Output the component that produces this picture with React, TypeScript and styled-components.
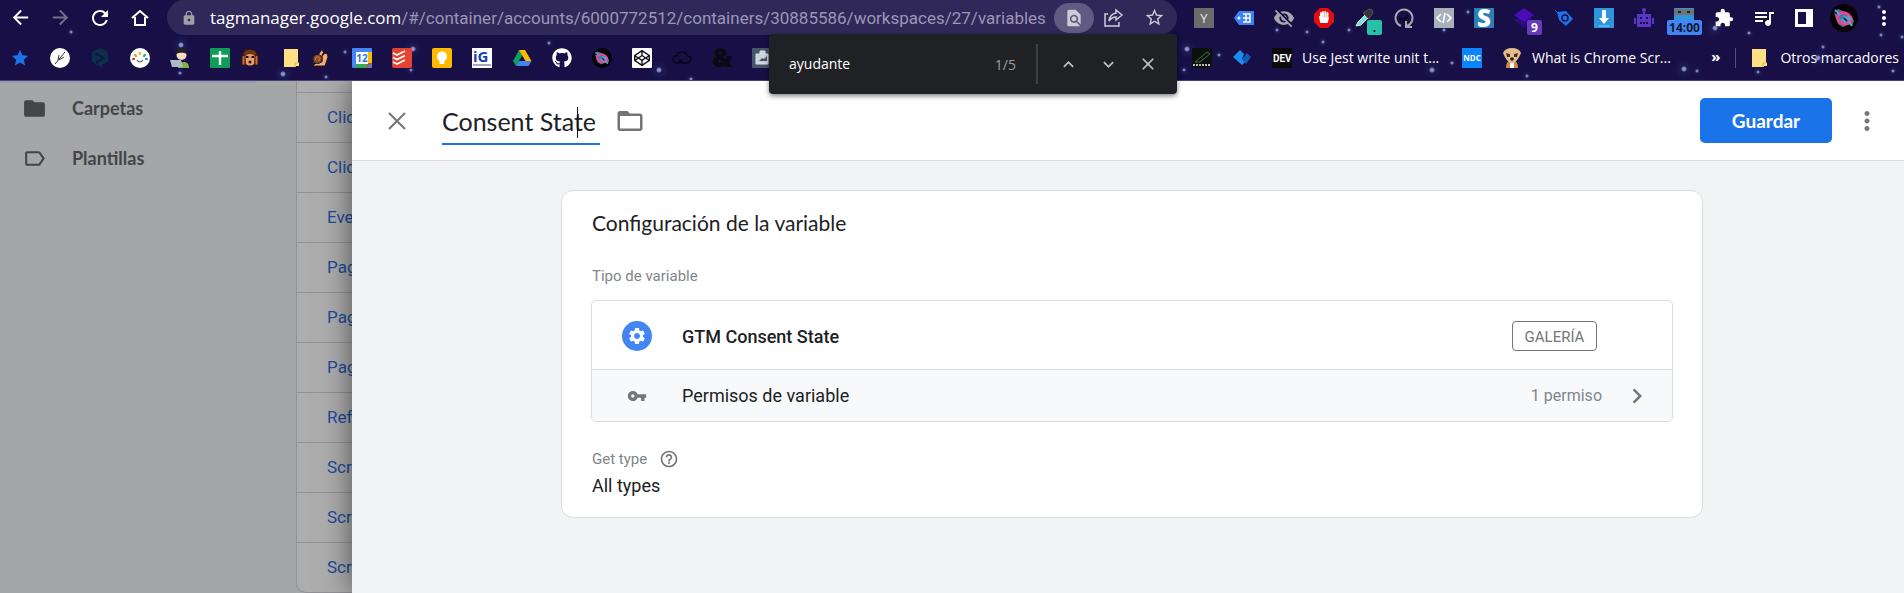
import React from "react";
import styled, { createGlobalStyle, css } from "styled-components";
import {
  MdArrowBack, MdArrowForward, MdRefresh, MdLock, MdFindInPage, MdStarBorder, MdExtension,
  MdQueueMusic, MdMoreVert, MdFolder, MdLabelOutline, MdClose, MdFolderOpen, MdSettings,
  MdVpnKey, MdHelpOutline, MdChevronRight, MdKeyboardArrowUp, MdKeyboardArrowDown,
  MdVisibilityOff, MdStar,
} from "react-icons/md";
import { FaGithub, FaCodepen } from "react-icons/fa";

const UI = `"Open Sans", "Noto Sans", sans-serif`;
const BRAND = `Lato, Roboto, sans-serif`;
const BODY = `Roboto, "Liberation Sans", sans-serif`;

const STARS: [number, number, number][] = [
  [71, 32, 1], [181, 45, 2], [180, 73, 1], [345, 52, 1], [283, 74, 2], [326, 77, 1], [413, 49, 2],
  [411, 70, 1], [549, 43, 1], [659, 70, 2], [691, 79, 1], [1187, 49, 2], [1184, 70, 1],
  [1277, 30, 1], [1307, 32, 1], [1349, 30, 1], [1323, 42, 1], [1219, 55, 1], [1444, 30, 1],
  [1468, 12, 1], [1452, 63, 1], [1432, 70, 2], [1527, 76, 1], [1715, 28, 2], [1749, 33, 1],
  [1684, 69, 2], [1697, 71, 1], [1879, 7, 1], [1881, 35, 1], [1902, 37, 1], [1823, 47, 1],
  [1818, 58, 2], [1758, 72, 1], [1893, 71, 1],
];
const sky = STARS.map(([x, y, r]) =>
  `radial-gradient(circle at ${x}px ${y}px, #a9a9dc 0, #7474ad ${r}px, rgba(38,44,112,.4) ${r + 1}px, transparent ${r * 5}px)`
).join(",");

const GlobalStyle = createGlobalStyle`
  * { box-sizing: border-box; }
  html, body, #root { height: 100%; }
  body { margin: 0; overflow: hidden; font-family: ${BODY}; background: #a5a6a8; }
  button { border: 0; padding: 0; background: none; color: inherit; font: inherit; cursor: pointer; }
  a { color: inherit; text-decoration: none; }
  svg { display: block; flex: none; overflow: visible; }
`;

const Window = styled.div`
  min-height: 100%;
  display: flex;
  flex-direction: column;
`;

const Chrome = styled.header`
  flex: none;
  background: ${sky}, #170f45;
  border-bottom: 1px solid #4c3d72;
  color: #fff;
  font-family: ${UI};
  position: relative;
  z-index: 5;
`;
const Toolbar = styled.div`
  display: flex;
  height: 35px;
`;
const ToolButton = styled.button<{ $dim?: boolean }>`
  width: 40px;
  height: 35px;
  display: flex;
  align-items: center;
  justify-content: center;
  position: relative;
  color: ${(p) => (p.$dim ? "#747087" : "#fff")};
`;
const Omnibox = styled.div`
  flex: 1;
  min-width: 0;
  margin: 0 7px;
  padding: 0 3px 0 14px;
  display: flex;
  align-items: center;
  background: #302859;
  border-radius: 18px;
  position: relative;
`;
const Url = styled.div`
  flex: 1;
  margin-left: 13px;
  font-size: 17px;
  line-height: 24px;
  white-space: nowrap;
  color: #9b96b6;
  font-family: ${BODY};
  b { font-weight: 400; color: #fff; font-family: ${UI}; }
`;
const OmniButton = styled.button<{ $active?: boolean }>`
  width: 40px;
  height: 30px;
  display: flex;
  align-items: center;
  justify-content: center;
  border-radius: 15px;
  color: #cfccd6;
  background: ${(p) => (p.$active ? "#615a82" : "none")};
`;
const Count = styled.span<{ $tone: "teal" | "violet" | "blue" }>`
  position: absolute;
  top: 20px;
  height: 15px;
  line-height: 15px;
  border-radius: 2px;
  font-size: 12px;
  font-weight: 700;
  text-align: center;
  ${(p) => p.$tone === "teal" && css`right: 2px; width: 15px; background: #27c1a8; color: #123;`}
  ${(p) => p.$tone === "violet" && css`right: 2px; width: 15px; background: #673ab7; color: #fff;`}
  ${(p) => p.$tone === "blue" && css`left: 3px; width: 35px; background: #4285f4; color: #101830;`}
`;

const Bookmarks = styled.nav`
  display: flex;
  align-items: center;
  height: 45px;
  font-size: 14px;
`;
const Bookmark = styled.a<{ $w?: number }>`
  flex: none;
  width: ${(p) => p.$w ?? 40}px;
  padding-left: 10px;
  display: flex;
  align-items: center;
  gap: 10px;
  white-space: nowrap;
`;
const HiddenBookmarks = styled.div`
  width: 400px;
`;
const Grow = styled.div`
  flex: 1;
`;
const More = styled.button`
  font-size: 15px;
  font-weight: 700;
  line-height: 20px;
  padding: 0 15px 4px 0;
`;
const OtherBookmarks = styled.a`
  display: flex;
  align-items: center;
  gap: 11px;
  padding: 0 5px 0 13px;
  border-left: 1px solid #55507a;
  line-height: 20px;
`;

const FindBar = styled.form`
  position: absolute;
  top: 34px;
  right: 0;
  width: 408px;
  height: 60px;
  padding: 0 9px 0 20px;
  display: flex;
  align-items: center;
  background: #202124;
  border-radius: 4px;
  box-shadow: 0 2px 5px rgba(0, 0, 0, 0.5);
  color: #9aa0a6;
  font-size: 14px;
`;
const FindInput = styled.input`
  flex: 1;
  min-width: 0;
  padding: 0 0 2px;
  border: 0;
  outline: 0;
  background: none;
  color: #fff;
  font: inherit;
`;
const FindDivider = styled.span`
  width: 2px;
  height: 40px;
  margin: 0 10px 0 20px;
  background: #3c4043;
`;
const FindButton = styled.button`
  width: 40px;
  height: 40px;
  display: flex;
  align-items: center;
  justify-content: center;
  color: #bdc1c6;
`;

const Workspace = styled.div`
  flex: 1;
  min-height: 0;
  display: flex;
`;
const SideNav = styled.nav`
  flex: none;
  width: 296px;
  background: #a5a6a8;
  color: #434548;
`;
const ActiveItem = styled.div`
  width: 256px;
  height: 2px;
  background: #929cae;
  border-bottom-right-radius: 8px;
`;
const SideLink = styled.a`
  height: 50px;
  padding-left: 22px;
  display: flex;
  align-items: center;
  gap: 25px;
  font: 700 18px/24px ${BRAND};
`;
const VariableList = styled.ul`
  flex: none;
  width: 56px;
  margin: 0;
  padding: 11px 0 0;
  overflow: hidden;
  list-style: none;
  background: #adadad;
  border-left: 1px solid #929294;
  border-bottom: 1px solid #929294;
  border-bottom-left-radius: 10px;
`;
const VariableRow = styled.li`
  height: 50px;
  padding-left: 30px;
  border-top: 1px solid #929294;
  font-size: 17px;
  line-height: 48px;
  color: #1d4b9c;
  white-space: nowrap;
`;

const Drawer = styled.main`
  flex: 1;
  min-width: 0;
  display: flex;
  flex-direction: column;
  position: relative;
  background: #f1f3f4;
  box-shadow: 0 0 28px rgba(0, 0, 0, 0.55);
  color: #202124;
`;
const DrawerHeader = styled.div`
  flex: none;
  height: 80px;
  padding: 0 22px 0 30px;
  display: flex;
  align-items: center;
  background: #fff;
  border-bottom: 1px solid #dadce0;
  color: #757575;
`;
const IconButton = styled.button`
  display: flex;
  align-items: center;
  justify-content: center;
`;
const TitleField = styled.div`
  position: relative;
  margin: 4px 15px 0 30px;
`;
const TitleInput = styled.input`
  display: block;
  width: 158px;
  height: 44px;
  padding: 0 0 2px;
  border: 0;
  border-bottom: 2px solid #1a73e8;
  border-radius: 0;
  outline: 0;
  background: none;
  color: #202124;
  font: 400 25px/36px ${BRAND};
`;
const Caret = styled.span`
  position: absolute;
  left: 135px;
  top: 6px;
  width: 1px;
  height: 31px;
  background: #111;
`;
const SaveButton = styled.button`
  width: 132px;
  height: 45px;
  margin: 0 20px 0 auto;
  border-radius: 5px;
  background: #1a73e8;
  color: #fff;
  font: 700 19px/24px ${BRAND};
`;
const DrawerBody = styled.div`
  flex: 1;
  padding: 29px 0 0 8px;
`;
const Card = styled.section`
  width: 100%;
  max-width: 1142px;
  margin: 0 auto;
  padding: 18px 29px 16px;
  background: #fff;
  border: 1px solid #dadce0;
  border-radius: 12px;
`;
const CardTitle = styled.h2`
  margin: 0 0 27px;
  padding-left: 1px;
  font: 400 21px/28px ${BRAND};
`;
const FieldLabel = styled.div`
  display: flex;
  align-items: center;
  gap: 12px;
  height: 24px;
  padding-left: 1px;
  font-size: 15px;
  color: #80868b;
`;
const TypeBox = styled.div`
  margin: 12px 0 25px;
  border: 1px solid #dadce0;
  border-radius: 5px;
  overflow: hidden;
`;
const TypeRow = styled.div<{ $sub?: boolean }>`
  height: ${(p) => (p.$sub ? 52 : 68)}px;
  padding: ${(p) => (p.$sub ? "0 20px 0 30px" : "2px 75px 0 30px")};
  display: flex;
  align-items: center;
  font-size: 18px;
  ${(p) => p.$sub && css`
    border-top: 1px solid #dadce0;
    background: #f8f9fb;
  `}
`;
const RowIcon = styled.span<{ $filled?: boolean }>`
  width: 30px;
  height: 30px;
  margin-right: 30px;
  display: flex;
  align-items: center;
  justify-content: center;
  border-radius: 50%;
  color: ${(p) => (p.$filled ? "#fff" : "#757575")};
  background: ${(p) => (p.$filled ? "#4285f4" : "none")};
`;
const RowName = styled.span<{ $strong?: boolean }>`
  flex: 1;
  font-weight: ${(p) => (p.$strong ? 500 : 400)};
`;
const GalleryTag = styled.span`
  width: 85px;
  height: 30px;
  border: 1px solid #757575;
  border-radius: 4px;
  font-size: 15px;
  line-height: 30px;
  text-align: center;
  color: #757575;
`;
const Permission = styled.span`
  margin-right: 20px;
  font-size: 16px;
  color: #80868b;
`;
const FieldValue = styled.div`
  padding-left: 1px;
  font-size: 18px;
  line-height: 30px;
`;

const Tile = ({ bg, r = 1, s = 20, children }: { bg: string; r?: number; s?: number; children?: React.ReactNode }) => (
  <svg width={s} height={s} viewBox="0 0 20 20"><rect width="20" height="20" rx={r} fill={bg} />{children}</svg>
);
const txt = (t: string, size: number, fill: string, y: number, weight = 700) => (
  <text x="10" y={y} fontSize={size} fontWeight={weight} textAnchor="middle" fill={fill} fontFamily="Open Sans">{t}</text>
);
const FolderNote = () => (
  <svg width="20" height="20" viewBox="0 0 20 20"><path d="M3 1h14v13l1 1v3h-3v1H3z" fill="#ffe082" /><path d="M14 19v-4h3" fill="none" stroke="#d9b24a" /></svg>
);
const Turtle = ({ s = 20 }: { s?: number }) => (
  <svg width={s} height={s} viewBox="0 0 28 28">
    <circle cx="14" cy="14" r="14" fill="#050308" />
    <path d="M4 9l4-4 5 2 8 5 3 5-2 5-3-2-6 3-5-3z" fill="#3f7ba3" />
    <path d="M9 10c5-3 10 0 12 4 1 3-2 6-6 6-5 0-10-6-6-10z" fill="none" stroke="#f2418f" strokeWidth="3" />
    <path d="M5 6l5 5m8 6l4 5m-8-10l5 4m-8-1l5 4m2-7l3 4" stroke="#62a3c4" strokeWidth="2" />
    <path d="M4 9h3m7 5l3 3" stroke="#241b4c" strokeWidth="1.5" />
  </svg>
);

const bookmarks: { name: string; w?: number; icon: React.ReactNode }[] = [
  { name: "Favoritos", icon: <MdStar size={20} color="#1a73e8" /> },
  { name: "Bambú", icon: <Tile bg="#fff" r={10}><path d="M5 16L15 4M9 12l5-3M8 12l1-5" stroke="#333" strokeWidth="1" /></Tile> },
  { name: "DeepL", icon: <svg width="20" height="20" viewBox="0 0 20 20"><path d="M10 0l8 4v10l-6 3v3l-3-2-7-4V4z" fill="#0b2f4b" /><path d="M7 6l6 4-6 4" stroke="#170f45" strokeWidth="1.3" fill="none" /><g fill="#170f45"><circle cx="7" cy="6" r="1.5" /><circle cx="13" cy="10" r="1.5" /><circle cx="7" cy="14" r="1.5" /></g></svg> },
  { name: "Colores", icon: <Tile bg="#fff" r={10}><g strokeWidth="2.2" strokeLinecap="round"><path d="M3 11h1" stroke="#d33" /><path d="M5 7l1 1" stroke="#e90" /><path d="M10 5v1" stroke="#fa0" /><path d="M14 8l1-1" stroke="#2a6" /><path d="M16 11h1" stroke="#28d" /></g><path d="M7 12q3 4 6 0" stroke="#555" strokeWidth="1.2" fill="none" /></Tile> },
  { name: "Desarrollador", icon: <svg width="20" height="20" viewBox="0 0 20 20"><path d="M8 20c0-4 3-6 6-6s5 2 5 6z" fill="#7cb342" /><circle cx="11.500" cy="7" r="5" fill="#f7dcc4" /><path d="M6 6c0-8 11-8 11 0-3-1-7-2-11 0z" fill="#222" /><path d="M0 12h11l2 7H2z" fill="#aebcc6" /></svg> },
  { name: "Hojas", w: 30, icon: <Tile bg="#0f9d58"><path d="M10 3v14M2 8h16" stroke="#fff" strokeWidth="2.4" /></Tile> },
  { name: "Mono", w: 41, icon: <svg width="20" height="20" viewBox="0 0 20 20"><path d="M3 5q2-4 7-4t7 4v12H3z" fill="#6b3519" stroke="#2a1208" /><path d="M5 8q5-4 10 0l-1 8q-4 3-8 0z" fill="#e99a6a" /><path d="M6 9h2.500m3 0H14" stroke="#1b0d08" strokeWidth="1.800" /><circle cx="10" cy="14" r="1.500" fill="#3a140a" /><path d="M2 8v9h3V7zM18 8v9h-3V7z" fill="#c96d38" stroke="#3a1b0e" /></svg> },
  { name: "Carpeta", w: 30, icon: <FolderNote /> },
  { name: "Caracol", w: 41, icon: <svg width="20" height="20" viewBox="0 0 20 20"><path d="M2 15l9-1V8q0-3 2-3l-2-3m3 4l2-4m-2 3q3 0 3 4l-3 9H2z" fill="#f3ac80" stroke="#2a1710" /><circle cx="6.500" cy="11" r="4.600" fill="#8a4a25" stroke="#2a1710" /><path d="M4.500 12q0-4 3-3t0 4" fill="none" stroke="#c8835a" /></svg> },
  { name: "Calendario", icon: <Tile bg="#4285f4"><path d="M15 4h5v11h-5z" fill="#fbbc04" /><path d="M4 15h11v5H4z" fill="#34a853" /><path d="M15 15h5l-5 5z" fill="#ea4335" /><path d="M4 4h12v12H4z" fill="#fff" />{txt("12", 10, "#2f74dd", 14)}</Tile> },
  { name: "Todoist", icon: <Tile bg="#e44332" r={2}><path d="M1 5l4 2 8-4M1 9.500l4 2 8-4M1 14l4 2 8-4" fill="none" stroke="#fff" strokeWidth="1.700" /></Tile> },
  { name: "Keep", icon: <Tile bg="#ffba00" r={2}><circle cx="10" cy="8.500" r="5" fill="#fff" /><path d="M7.500 12h5v4h-5z" fill="#fff" /></Tile> },
  { name: "iG", icon: <Tile bg="#fff" r={0}><text x="1" y="14" fontSize="15" fontWeight="700" fontFamily="Open Sans" fill="#1740ad">iG</text><path d="M1 17h18" stroke="#88a" strokeWidth="1.500" /></Tile> },
  { name: "Drive", icon: <svg width="20" height="20" viewBox="0 0 20 20"><path d="M7 2L1 13l3 5 6.500-11z" fill="#0f9d58" /><path d="M7 2h6l6.500 11h-6z" fill="#ffba00" /><path d="M7 13h12.500l-3 5H4z" fill="#4285f4" /></svg> },
  { name: "GitHub", icon: <FaGithub size={20} /> },
  { name: "Tortuga", icon: <Turtle /> },
  { name: "CodePen", icon: <Tile bg="#fff"><g transform="translate(2 2)"><FaCodepen size={16} color="#111" /></g></Tile> },
  { name: "Nube", icon: <svg width="20" height="20" viewBox="0 0 20 20"><path d="M5 15q-5-1-4-5 1-3 4-2 1-5 6-4 3 0 4 4 5 1 4 4-1 3-4 3z" fill="none" stroke="#08061a" strokeWidth="1.300" /><path d="M5 15l3-4 5 4z" fill="#08061a" /></svg> },
  { name: "Ampersand", icon: <svg width="20" height="20" viewBox="0 0 20 20"><text x="0" y="19" fontSize="26" fontWeight="800" fontFamily="Open Sans" fill="#0b0912">&amp;</text></svg> },
  { name: "Maletín", icon: <Tile bg="#475569"><path d="M4 6h12v10H4zM8 6V3h5v3" fill="#cbd3da" stroke="#dde" /><path d="M7 13l3-3 2 1 3-3v5z" fill="#475569" /></Tile> },
];

const extensions: { name: string; icon: React.ReactNode; count?: React.ReactNode }[] = [
  { name: "Y", icon: <Tile bg="#6b6b6b" r={0}>{txt("Y", 13, "#e8e8e8", 15, 400)}</Tile> },
  { name: "Etiquetas", icon: <svg width="20" height="20" viewBox="0 0 20 20"><path d="M0 10l5-7h15v14H5z" fill="#3b82f6" /><path d="M9 6h3v8H9m4-8h3v8h-3m-4-4h7" fill="none" stroke="#fff" strokeWidth="1.500" /><circle cx="5" cy="10" r="1.500" fill="#fff" /></svg> },
  { name: "Ocultar", icon: <MdVisibilityOff size={22} color="#a7a7ad" /> },
  { name: "Bloqueador", icon: <svg width="20" height="20" viewBox="0 0 20 20"><path d="M6 0h8l6 6v8l-6 6H6l-6-6V6z" fill="#e40d0d" /><path d="M7 11V5m2 5V4m2.300 6V4m2.200 7V5M6 9l1 5h6l1-4" stroke="#fff" strokeWidth="1.900" strokeLinecap="round" fill="#fff" /></svg> },
  { name: "Cuentagotas", icon: <svg width="20" height="20" viewBox="0 0 20 20"><path d="M2 18l2-4 7-7 3 3-7 7z" fill="#7ee0d3" stroke="#d8e8ea" /><path d="M9 5l6 6 1-2 3-4q0-4-4-4l-3 2z" fill="#333" stroke="#555" /></svg>, count: <Count $tone="teal">.</Count> },
  { name: "Reloj", icon: <svg width="20" height="20" viewBox="0 0 20 20"><path d="M7 18a8.500 8.500 0 1 1 6 0M12 13v6h6" fill="none" stroke="#a7a7ad" strokeWidth="2" /><path d="M5 10l5 2 4-5" fill="none" stroke="#08061a" strokeWidth="2" /></svg> },
  { name: "Código", icon: <Tile bg="#a9b0ba" r={0}><path d="M7 6l-4 4 4 4m6-8l4 4-4 4M11 5l-2 10" fill="none" stroke="#fff" strokeWidth="1.600" /></Tile> },
  { name: "Stylus", icon: <Tile bg="#2d7fb8" r={0}>{txt("S", 24, "#fff", 19, 800)}</Tile> },
  { name: "Capas", icon: <svg width="20" height="20" viewBox="0 0 20 20"><path d="M0 12l10-6 10 6-10 8z" fill="#2d0a80" /><path d="M0 7l10-7 10 7-10 7z" fill="#4a0db4" /></svg>, count: <Count $tone="violet">9</Count> },
  { name: "Etiqueta", icon: <svg width="20" height="20" viewBox="0 0 20 20"><path d="M3 4l9-1 7 8-7 7-7-6z" fill="#1a73e8" /><circle cx="11" cy="10" r="3" fill="none" stroke="#170f45" strokeWidth="1.500" /><path d="M1 2l4 4" stroke="#1a73e8" /></svg> },
  { name: "Descargar", icon: <Tile bg="#2f96dc" r={0}><path d="M8 2h4v8h3l-5 6-5-6h3z" fill="#fff" /><path d="M5 18h10" stroke="#8cf" /></Tile> },
  { name: "Robot", icon: <svg width="20" height="20" viewBox="0 0 20 20"><path d="M3 6h14v13H3zM0 10h2v6H0zM18 10h2v6h-2zM9 2h2v5H9z" fill="#5b35c4" /><circle cx="10" cy="2" r="2" fill="#5b35c4" /><path d="M6 10h2m4 0h2M6 15h2m1 0h2m1 0h2" stroke="#170f45" strokeWidth="2" /></svg> },
  { name: "Temporizador", icon: <Tile bg="#2f96dc" r={0}><path d="M0 1h20v6H0z" fill="#737373" /><path d="M4 4h3m6 0h3" stroke="#222" strokeWidth="2" /></Tile>, count: <Count $tone="blue">14:00</Count> },
  { name: "Extensiones", icon: <MdExtension size={20} /> },
  { name: "Música", icon: <MdQueueMusic size={24} /> },
  { name: "Panel lateral", icon: <svg width="18" height="18" viewBox="0 0 18 18"><path fillRule="evenodd" d="M0 0h18v18H0zM3 3v12h8V3z" fill="#fff" /></svg> },
  { name: "Perfil", icon: <Turtle s={28} /> },
  { name: "Menú", icon: <MdMoreVert size={24} /> },
];

const variables = ["Clic", "Clic", "Eve", "Pag", "Pag", "Pag", "Ref", "Scr", "Scr", "Scr"];

export default function App() {
  return (
    <Window>
      <GlobalStyle />
      <Chrome>
        <Toolbar>
          <ToolButton aria-label="Atrás"><MdArrowBack size={23} /></ToolButton>
          <ToolButton aria-label="Adelante" $dim><MdArrowForward size={23} /></ToolButton>
          <ToolButton aria-label="Recargar"><MdRefresh size={24} /></ToolButton>
          <ToolButton aria-label="Inicio">
            <svg width="18" height="18" viewBox="0 0 18 18"><path d="M1 9l8-7 8 7M4 8v8h10V8" fill="none" stroke="#fff" strokeWidth="2" /></svg>
          </ToolButton>
          <Omnibox>
            <MdLock size={16} color="#a09fa8" />
            <Url><b>tagmanager.google.com</b>/#/container/accounts/6000772512/containers/30885586/workspaces/27/variables</Url>
            <OmniButton aria-label="Buscar en la página" $active><MdFindInPage size={20} /></OmniButton>
            <OmniButton aria-label="Compartir">
              <svg width="20" height="18" viewBox="0 0 20 18"><path d="M4 5H1v12h14v-4M12 1l6 5-6 5V8Q8 8 5 12q1-7 7-8z" fill="none" stroke="#cfccd6" strokeWidth="1.500" /></svg>
            </OmniButton>
            <OmniButton aria-label="Añadir a marcadores"><MdStarBorder size={21} /></OmniButton>
            <FindBar>
              <FindInput aria-label="Buscar" defaultValue="ayudante" />
              <span>1/5</span>
              <FindDivider />
              <FindButton type="button" aria-label="Anterior"><MdKeyboardArrowUp size={21} /></FindButton>
              <FindButton type="button" aria-label="Siguiente"><MdKeyboardArrowDown size={21} /></FindButton>
              <FindButton type="button" aria-label="Cerrar"><MdClose size={20} /></FindButton>
            </FindBar>
          </Omnibox>
          {extensions.map((e) => (
            <ToolButton key={e.name} aria-label={e.name}>{e.icon}{e.count}</ToolButton>
          ))}
        </Toolbar>
        <Bookmarks>
          {bookmarks.map((b) => (
            <Bookmark key={b.name} href="#" aria-label={b.name} $w={b.w}>{b.icon}</Bookmark>
          ))}
          <HiddenBookmarks />
          <Bookmark href="#" aria-label="Notas">
            <Tile bg="#0c100e"><path d="M3 14l12-10 3 2-10 8z" fill="none" stroke="#49703f" /><path d="M1 17h18" stroke="#bbb" strokeWidth="2" strokeDasharray="2 1" /></Tile>
          </Bookmark>
          <Bookmark href="#" aria-label="Nubes">
            <svg width="20" height="20" viewBox="0 0 20 20"><path d="M1 9l7-7 4 4-2 5 3 3-3 3z" fill="#1c8df0" /><path d="M10 11l5-6 4 4-5 7z" fill="#1558b8" /></svg>
          </Bookmark>
          <Bookmark href="#" $w={190}>
            <Tile bg="#0a0a0a" r={0}><text x="1" y="14" fontSize="10" fontWeight="700" fontFamily="Roboto" fill="#fff">DEV</text></Tile>
            Use Jest write unit t...
          </Bookmark>
          <Bookmark href="#" aria-label="NDC">
            <Tile bg="#0a84ff" r={0}>{txt("NDC", 8, "#fff", 13)}</Tile>
          </Bookmark>
          <Bookmark href="#" $w={190}>
            <svg width="20" height="20" viewBox="0 0 20 20"><path d="M4 20q0-8 6-8t6 8z" fill="#c98a42" /><path d="M1 5q2-5 9-5t9 5q-3 8-9 11Q4 13 1 5z" fill="#e2bd8a" /><path d="M4 5l4 1v3H5zM16 5l-4 1v3h3z" fill="#4a2d1a" /><circle cx="10" cy="11" r="1.800" fill="#20140c" /><path d="M8 15h4v5H8z" fill="#fff" /></svg>
            What is Chrome Scr...
          </Bookmark>
          <Grow />
          <More aria-label="Más marcadores">»</More>
          <OtherBookmarks href="#"><FolderNote />Otros marcadores</OtherBookmarks>
        </Bookmarks>
      </Chrome>

      <Workspace>
        <SideNav>
          <ActiveItem />
          <SideLink href="#"><MdFolder size={25} />Carpetas</SideLink>
          <SideLink href="#"><MdLabelOutline size={25} />Plantillas</SideLink>
        </SideNav>
        <VariableList>
          {variables.map((v, i) => <VariableRow key={i}><a href="#">{v}</a></VariableRow>)}
        </VariableList>

        <Drawer>
          <DrawerHeader>
            <IconButton aria-label="Cerrar">
              <svg width="30" height="30" viewBox="0 0 30 30"><path d="M7 7l16 16M23 7L7 23" stroke="#757575" strokeWidth="2" /></svg>
            </IconButton>
            <TitleField>
              <TitleInput aria-label="Nombre de la variable" defaultValue="Consent State" />
              <Caret />
            </TitleField>
            <IconButton aria-label="Mover a carpeta"><MdFolderOpen size={30} /></IconButton>
            <SaveButton>Guardar</SaveButton>
            <IconButton aria-label="Más acciones"><MdMoreVert size={30} /></IconButton>
          </DrawerHeader>
          <DrawerBody>
            <Card>
              <CardTitle>Configuración de la variable</CardTitle>
              <FieldLabel>Tipo de variable</FieldLabel>
              <TypeBox>
                <TypeRow>
                  <RowIcon $filled><MdSettings size={20} /></RowIcon>
                  <RowName $strong>GTM Consent State</RowName>
                  <GalleryTag>GALERÍA</GalleryTag>
                </TypeRow>
                <TypeRow $sub>
                  <RowIcon><MdVpnKey size={20} /></RowIcon>
                  <RowName>Permisos de variable</RowName>
                  <Permission>1 permiso</Permission>
                  <MdChevronRight size={30} color="#757575" />
                </TypeRow>
              </TypeBox>
              <FieldLabel>Get type <MdHelpOutline size={20} color="#757575" /></FieldLabel>
              <FieldValue>All types</FieldValue>
            </Card>
          </DrawerBody>
        </Drawer>
      </Workspace>
    </Window>
  );
}
